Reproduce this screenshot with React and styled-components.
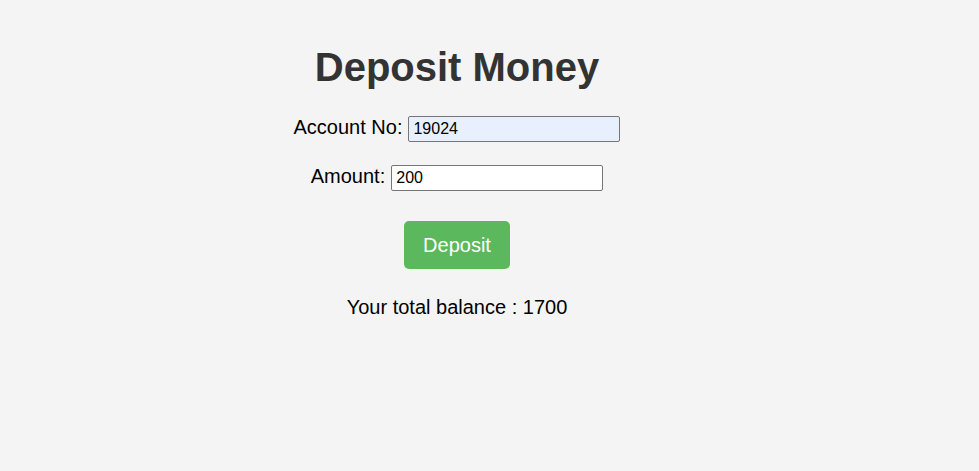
import React from "react";
import styled, { createGlobalStyle } from "styled-components";

const GlobalStyle = createGlobalStyle`
  html, body {
    margin: 0;
    padding: 0;
    background: #f4f4f4;
    font-family: "Liberation Sans", Arial, sans-serif;
  }
`;

const Page = styled.div`
  min-height: 471px;
  padding: 44px 65px 0 0;
  display: flex;
  flex-direction: column;
  align-items: center;
  box-sizing: border-box;
`;

const Title = styled.h1`
  margin: 0 0 26px;
  font-size: 40px;
  font-weight: bold;
  color: #333;
  line-height: 46px;
`;

const Row = styled.div`
  display: flex;
  align-items: baseline;
  gap: 6px;
  margin-bottom: ${(props) => props.space || 23}px;
`;

const Label = styled.label`
  font-size: 20px;
  color: #000;
`;

const Input = styled.input`
  box-sizing: border-box;
  width: 212px;
  height: 26px;
  padding: 3px 4px;
  font-family: "Liberation Sans", Arial, sans-serif;
  font-size: 16px;
  color: #000;
  background: ${(props) => (props.filled ? "#e8f0fe" : "#fff")};
  border: 1px solid #767676;
  border-radius: 2px;
  outline: none;
`;

const Button = styled.button`
  box-sizing: border-box;
  width: 106px;
  height: 48px;
  padding: 0;
  font-family: "Liberation Sans", Arial, sans-serif;
  font-size: 20px;
  color: #fff;
  background: #5cb85c;
  border: none;
  border-radius: 5px;
  cursor: pointer;
  margin-bottom: 27px;
`;

const Balance = styled.p`
  margin: 0;
  font-size: 20px;
  color: #000;
`;

export default function App() {
  return (
    <>
      <GlobalStyle />
      <Page>
        <Title>Deposit Money</Title>
        <Row>
          <Label>Account No:</Label>
          <Input filled defaultValue="19024" />
        </Row>
        <Row space={30}>
          <Label>Amount:</Label>
          <Input defaultValue="200" />
        </Row>
        <Button>Deposit</Button>
        <Balance>Your total balance : 1700</Balance>
      </Page>
    </>
  );
}
